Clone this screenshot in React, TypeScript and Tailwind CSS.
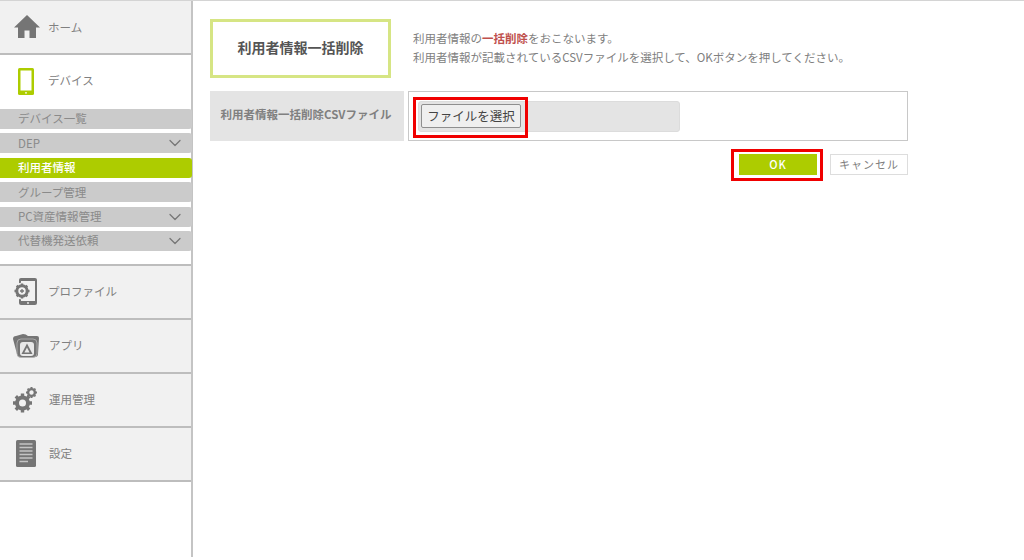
import { ChevronDown } from 'lucide-react';

const font = "font-['Noto_Sans_CJK_JP','Liberation_Sans',sans-serif]";

function HomeIcon() {
  return (
    <svg width="28" height="24" viewBox="0 0 28 24" fill="#757575">
      <path d="M14 0 L27 12.5 L23 12.5 L23 23 L16.5 23 L16.5 15.5 L11.5 15.5 L11.5 23 L5 23 L5 12.5 L1 12.5 Z" />
    </svg>
  );
}

function PhoneIcon() {
  return (
    <svg width="16" height="27" viewBox="0 0 16 27">
      <rect x="0" y="0" width="16" height="27" rx="1.5" fill="#adcc00" />
      <rect x="2.5" y="2.5" width="11" height="20" fill="#fff" />
      <circle cx="8" cy="24.8" r="0.9" fill="#fff" />
    </svg>
  );
}

function ProfileIcon() {
  return (
    <svg width="24" height="28" viewBox="0 0 24 28">
      <rect x="6" y="0" width="18" height="27" rx="2" fill="#757575" />
      <rect x="8" y="3" width="14" height="20" fill="#f1f1f1" />
      <circle cx="15" cy="25" r="0.9" fill="#f1f1f1" />
      <circle cx="9" cy="13" r="8.6" fill="#f1f1f1" />
      <circle cx="9" cy="13" r="5.2" fill="none" stroke="#757575" strokeWidth="3" />
      <path d="M9 5.5 V8 M9 18 V20.5 M1.5 13 H4 M14 13 H16.5 M3.7 7.7 L5.5 9.5 M12.5 16.5 L14.3 18.3 M3.7 18.3 L5.5 16.5 M12.5 9.5 L14.3 7.7" stroke="#757575" strokeWidth="2.4" />
      <path d="M7 13 H11 M9 11 V15" stroke="#757575" strokeWidth="1.3" />
    </svg>
  );
}

function AppIcon() {
  return (
    <svg width="26" height="24" viewBox="0 0 26 24">
      <path d="M0 5 Q0 2 3 2 L10 0 Q13 0 15 2 L24 2 Q26 2 26 4 L25 20 Q25 23 22 23 L8 23 Q5 23 4 20 Z" fill="#757575" />
      <rect x="4" y="5" width="20" height="18.5" rx="4" fill="#757575" stroke="#b5b5b5" strokeWidth="0.8" />
      <rect x="7" y="8" width="14" height="14" rx="3" fill="#e8e8e8" />
      <path d="M14 9.5 L19.5 20 L8.5 20 Z" fill="#757575" />
      <path d="M14 13.5 L16.6 18.5 L11.4 18.5 Z" fill="#e8e8e8" />
    </svg>
  );
}

function GearIcon() {
  return (
    <svg width="24" height="26" viewBox="0 0 24 26">
      <circle cx="9.5" cy="16" r="5.5" fill="none" stroke="#757575" strokeWidth="4" />
      <path d="M9.5 6.5 V9.5 M9.5 22.5 V25.5 M0 16 H3 M16 16 H19 M2.8 9.3 L5 11.5 M14 20.5 L16.2 22.7 M2.8 22.7 L5 20.5 M14 11.5 L16.2 9.3" stroke="#757575" strokeWidth="3.4" />
      <circle cx="18.5" cy="5.5" r="3.4" fill="none" stroke="#757575" strokeWidth="2.4" />
      <path d="M18.5 0 V1.5 M18.5 9.5 V11 M13 5.5 H14.5 M22.5 5.5 H24 M14.6 1.6 L15.6 2.6 M21.4 8.4 L22.4 9.4 M14.6 9.4 L15.6 8.4 M21.4 2.6 L22.4 1.6" stroke="#757575" strokeWidth="2" />
    </svg>
  );
}

function DocIcon() {
  return (
    <svg width="20" height="27" viewBox="0 0 20 27">
      <rect x="0" y="0" width="20" height="27" rx="1.5" fill="#757575" />
      <path d="M3.5 4 H16.5 M3.5 7.5 H16.5 M3.5 11 H16.5 M3.5 14.5 H16.5 M3.5 18 H16.5 M3.5 21.5 H12" stroke="#c4c4c4" strokeWidth="1.3" />
    </svg>
  );
}

function MainNav({ icon, label, iconWidth, labelClass = '-mt-[1px]' }: { icon: React.ReactNode; label: string; iconWidth: string; labelClass?: string }) {
  return (
    <div className="flex h-[54px] items-center bg-[#f1f1f1] border-b-2 border-[#bdbdbd] pl-[13px] box-border">
      <div className={`${iconWidth} shrink-0 flex items-center`}>{icon}</div>
      <span className={`text-[11.5px] text-[#808080] ${labelClass}`}>{label}</span>
    </div>
  );
}

function SubNav({ label, active, chevron }: { label: string; active?: boolean; chevron?: boolean }) {
  return (
    <div
      className={`-mr-[1px] flex h-[20px] items-center justify-between rounded-r-[3px] pl-[18px] pr-[7px] text-[11.5px] ${
        active ? 'bg-[#adcc00] text-white font-medium' : 'bg-[#cbcbcb] text-[#8a8a8a]'
      }`}
    >
      <span>{label}</span>
      {chevron && <ChevronDown size={20} strokeWidth={1.5} className="text-[#777]" />}
    </div>
  );
}

export default function App() {
  return (
    <div className={`${font} flex h-[557px] w-[1024px] overflow-hidden bg-white border-t border-[#d4d4d4]`}>
      {/* Sidebar */}
      <div className="flex w-[193px] shrink-0 flex-col border-r-2 border-[#c4c4c4] box-border">
        <MainNav icon={<HomeIcon />} label="ホーム" iconWidth="w-[35px]" labelClass="pt-[1px]" />

        <div className="flex h-[54px] items-center pb-[2px] pl-[18px]">
          <div className="w-[30px] shrink-0 flex items-center"><PhoneIcon /></div>
          <span className="text-[11.5px] text-[#808080]">デバイス</span>
        </div>

        <div className="flex flex-col gap-[4.4px]">
          <SubNav label="デバイス一覧" />
          <SubNav label="DEP" chevron />
          <SubNav label="利用者情報" active />
          <SubNav label="グループ管理" />
          <SubNav label="PC資産情報管理" chevron />
          <SubNav label="代替機発送依頼" chevron />
        </div>

        <div className="mt-[13px] border-t-2 border-[#bdbdbd]">
          <MainNav icon={<ProfileIcon />} label="プロファイル" iconWidth="w-[35px]" />
          <MainNav icon={<AppIcon />} label="アプリ" iconWidth="w-[36px]" />
          <MainNav icon={<GearIcon />} label="運用管理" iconWidth="w-[36px]" />
          <MainNav icon={<div className="pl-[3px]"><DocIcon /></div>} label="設定" iconWidth="w-[36px]" />
        </div>
      </div>

      {/* Main Content */}
      <div className="flex-1 pl-[17px] pt-[18px]">
        <div className="flex items-center">
          <div className="flex h-[59px] w-[181px] items-center justify-center border-[3px] pb-[2px] border-[#d6e584] text-[14px] font-bold text-[#555]">
            利用者情報一括削除
          </div>
          <div className="ml-[22px] -mt-[2px] text-[11.5px] leading-[19px] text-[#808080]">
            <p>利用者情報の<span className="font-bold text-[#c0504d]">一括削除</span>をおこないます。</p>
            <p>利用者情報が記載されているCSVファイルを選択して、OKボタンを押してください。</p>
          </div>
        </div>

        <div className="mt-[13px] flex h-[50px] w-[698px]">
          <div className="flex w-[194px] items-center justify-center bg-[#e4e4e4] pb-[2px] pr-[2px] text-[11.5px] font-bold text-[#808080]">
            利用者情報一括削除CSVファイル
          </div>
          <div className="ml-[4px] flex flex-1 items-center border border-[#c8c8c8] pl-[9px]">
            <div className="relative flex h-[31px] w-[262px] items-center rounded-[3px] border border-[#dcdcdc] bg-[#e4e4e4] pl-[2px]">
              <div className="flex h-[24px] w-[100px] items-center justify-center rounded-[2px] border border-[#8f8f8f] bg-[#efefef] text-[12.5px] text-[#444]">
                ファイルを選択
              </div>
              <div className="absolute left-[-6px] top-[-5px] h-[41px] w-[115px] border-[3px] border-[#f00000]" />
            </div>
          </div>
        </div>

        <div className="mt-[13px] flex w-[698px] items-center justify-end gap-[13px]">
          <div className="relative flex h-[21px] w-[78px] items-center justify-center bg-[#adcc00] text-[11px] font-medium tracking-[1px] text-white">
            OK
            <div className="absolute left-[-8px] top-[-5px] h-[32px] w-[92px] border-[3px] border-[#f00000]" />
          </div>
          <div className="flex h-[21px] w-[78px] items-center justify-center border border-[#ddd] text-[11px] tracking-[1px] text-[#808080]">
            キャンセル
          </div>
        </div>
      </div>
    </div>
  );
}
